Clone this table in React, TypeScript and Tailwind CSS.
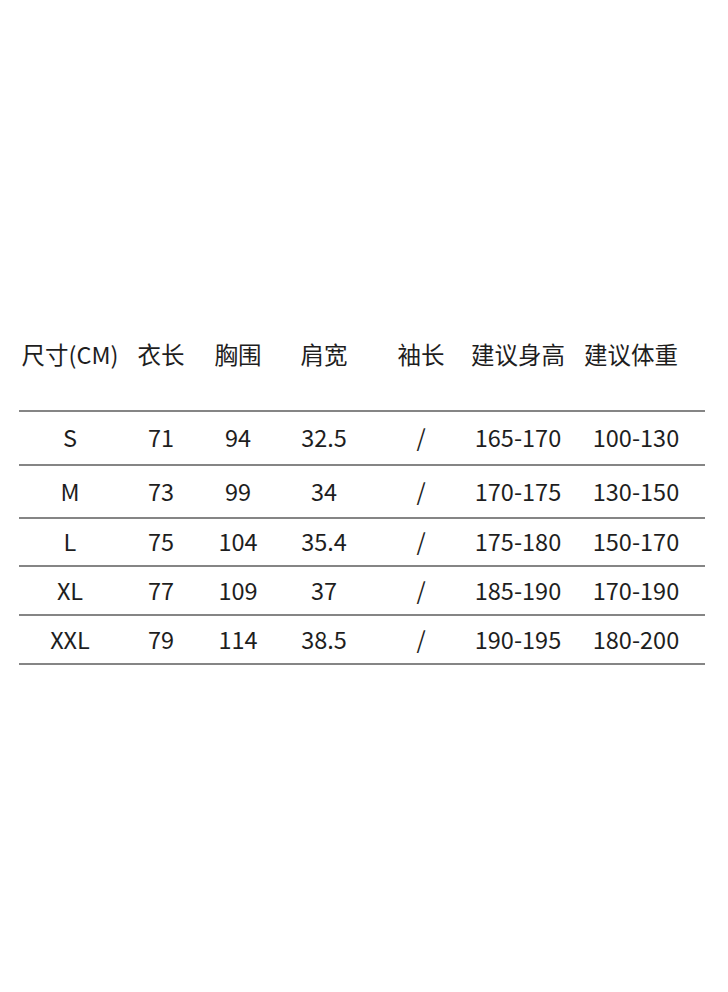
const cols = ["w-[102px]", "w-[80px]", "w-[74px]", "w-[98px]", "w-[96px]", "w-[98px]", "w-[138px]"];

const headers = ["尺寸(CM)", "衣长", "胸围", "肩宽", "袖长", "建议身高", "建议体重"];

const rows = [
  { h: "h-[54px]", cells: ["S", "71", "94", "32.5", "/", "165-170", "100-130"] },
  { h: "h-[53px]", cells: ["M", "73", "99", "34", "/", "170-175", "130-150"] },
  { h: "h-[48px]", cells: ["L", "75", "104", "35.4", "/", "175-180", "150-170"] },
  { h: "h-[49px]", cells: ["XL", "77", "109", "37", "/", "185-190", "170-190"] },
  { h: "h-[49px]", cells: ["XXL", "79", "114", "38.5", "/", "190-195", "180-200"] },
];

export default function App() {
  return (
    <div
      className="h-[992px] w-[728px] bg-white pt-[338px] text-[#1e1e1e]"
      style={{ fontFamily: '"Noto Sans CJK SC", "Noto Sans", sans-serif' }}
    >
      <div className="ml-[19px] w-[686px]">
        {/* header */}
        <div className="flex h-[32px] items-center text-[23.5px] leading-[32px]">
          {headers.map((t, i) => (
            <div
              key={t}
              className={`${cols[i]} shrink-0 whitespace-nowrap text-center ${i === 6 ? "pr-[10px]" : ""}`}
            >
              {t}
            </div>
          ))}
        </div>

        <div className="mt-[40px] border-b-2 border-[#858585]">
          {rows.map((r) => (
            <div
              key={r.cells[0]}
              className={`flex items-center border-t-2 border-[#858585] pb-[2px] text-[23.5px] leading-[32px] ${r.h}`}
            >
              {r.cells.map((c, i) => (
                <div key={i} className={`${cols[i]} shrink-0 text-center`}>
                  {c}
                </div>
              ))}
            </div>
          ))}
        </div>
      </div>
    </div>
  );
}
